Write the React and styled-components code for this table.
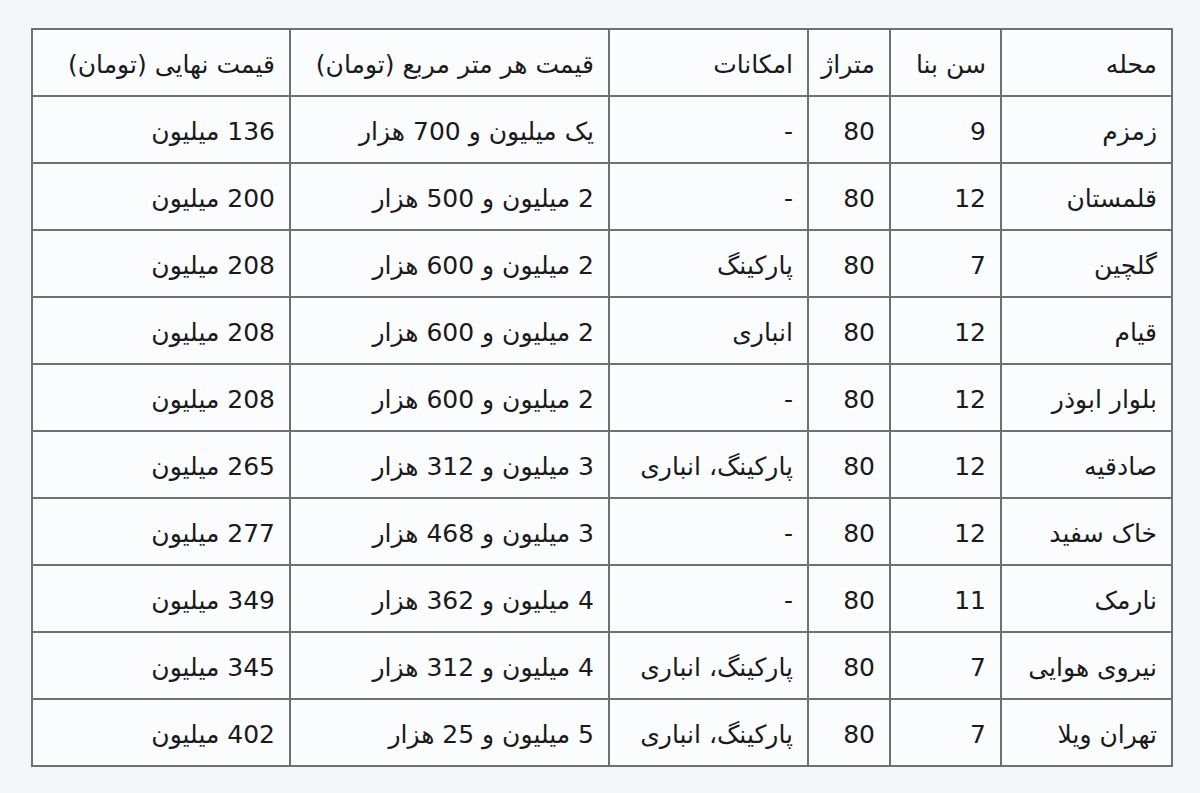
import React from "react";
import styled, { createGlobalStyle } from "styled-components";

const GlobalStyle = createGlobalStyle`
  html, body {
    margin: 0;
    padding: 0;
    background: #f4f7fa;
  }
`;

const Wrapper = styled.div`
  padding: 28px 27px 0 31px;
  height: 793px;
  box-sizing: border-box;
`;

const Table = styled.table`
  direction: rtl;
  width: 1142px;
  border-collapse: collapse;
  table-layout: fixed;
  font-family: "DejaVu Sans", sans-serif;
  font-size: 25px;
  color: #1a1a1a;
  background: #fbfcfe;
  border: 2px solid #707070;
`;

const Cell = styled.td`
  height: 61px;
  padding: 4px 14px 0 4px;
  border: 2px solid #707070;
  text-align: right;
  vertical-align: middle;
  white-space: nowrap;
  line-height: 1.1;
`;

const Head = styled(Cell).attrs({ as: "th" })`
  font-weight: normal;
`;

const widths = [171, 111, 82, 199, 319, 258];

const header = ["محله", "سن بنا", "متراژ", "امکانات", "قیمت هر متر مربع (تومان)", "قیمت نهایی (تومان)"];

const rows = [
  ["زمزم", "9", "80", "-", "یک میلیون و 700 هزار", "136 میلیون"],
  ["قلمستان", "12", "80", "-", "2 میلیون و 500 هزار", "200 میلیون"],
  ["گلچین", "7", "80", "پارکینگ", "2 میلیون و 600 هزار", "208 میلیون"],
  ["قیام", "12", "80", "انباری", "2 میلیون و 600 هزار", "208 میلیون"],
  ["بلوار ابوذر", "12", "80", "-", "2 میلیون و 600 هزار", "208 میلیون"],
  ["صادقیه", "12", "80", "پارکینگ، انباری", "3 میلیون و 312 هزار", "265 میلیون"],
  ["خاک سفید", "12", "80", "-", "3 میلیون و 468 هزار", "277 میلیون"],
  ["نارمک", "11", "80", "-", "4 میلیون و 362 هزار", "349 میلیون"],
  ["نیروی هوایی", "7", "80", "پارکینگ، انباری", "4 میلیون و 312 هزار", "345 میلیون"],
  ["تهران ویلا", "7", "80", "پارکینگ، انباری", "5 میلیون و 25 هزار", "402 میلیون"],
];

function App() {
  return (
    <Wrapper>
      <GlobalStyle />
      <Table>
        <colgroup>
          {widths.map((w, i) => (
            <col key={i} style={{ width: w }} />
          ))}
        </colgroup>
        <thead>
          <tr>
            {header.map((h) => (
              <Head key={h}>{h}</Head>
            ))}
          </tr>
        </thead>
        <tbody>
          {rows.map((r, i) => (
            <tr key={i}>
              {r.map((c, j) => (
                <Cell key={j}>{c}</Cell>
              ))}
            </tr>
          ))}
        </tbody>
      </Table>
    </Wrapper>
  );
}

export default App;
